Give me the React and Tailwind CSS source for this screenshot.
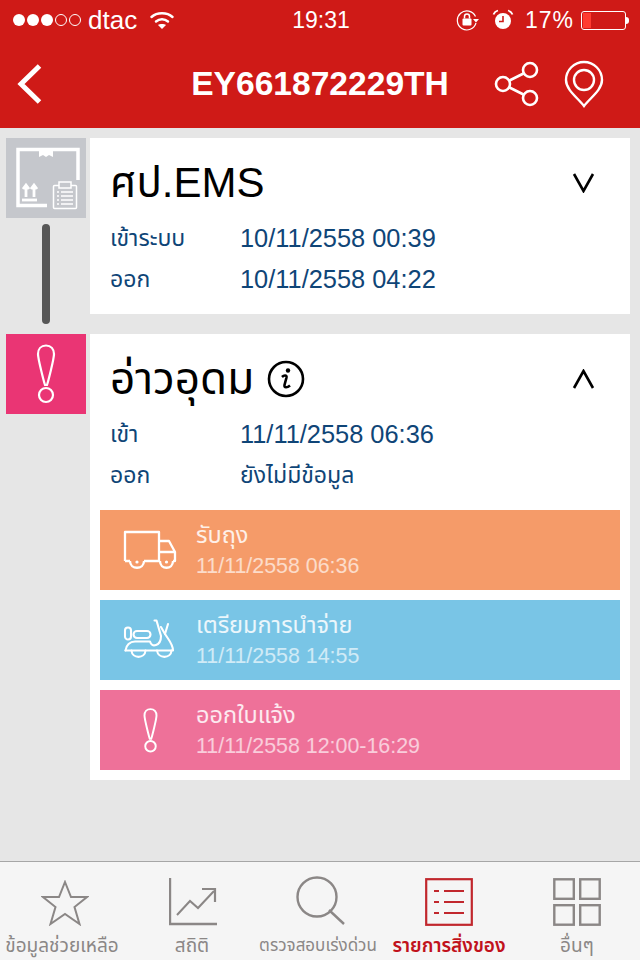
import React from "react";

function Wifi() {
  return (
    <svg width="26" height="20" viewBox="0 0 26 20" fill="none" stroke="#fff" strokeWidth="2.5" strokeLinecap="round">
      <path d="M2.5 7C8 2 18 2 23.5 7" />
      <path d="M7 11.5C10.5 8.5 15.5 8.5 19 11.5" />
      <path d="M13 19 L9 15 C11 13.6 15 13.6 17 15 Z" fill="#fff" stroke="none" />
    </svg>
  );
}

function Lock() {
  return (
    <svg width="24" height="22" viewBox="0 0 24 22" fill="none" stroke="#fff">
      <path d="M20 14A9.5 9.5 0 1 1 19.5 7.5" strokeWidth="1.2" />
      <path d="M17 10h6l-3 3.5z" fill="#fff" stroke="none" />
      <rect x="6.5" y="9.5" width="9" height="7" rx="1" fill="#fff" stroke="none" />
      <path d="M8.5 9.5V7.5a2.5 2.5 0 0 1 5 0v2" strokeWidth="1.5" />
    </svg>
  );
}

function Alarm() {
  return (
    <svg width="22" height="22" viewBox="0 0 22 22" fill="none">
      <circle cx="11" cy="12" r="8" fill="#fff" />
      <path d="M11 7v5.5H7" stroke="#cf1a17" strokeWidth="1.6" />
      <path d="M1.5 5.5C2.5 3 4 2 6 1.5M20.5 5.5C19.5 3 18 2 16 1.5" stroke="#fff" strokeWidth="1.8" />
    </svg>
  );
}

function Exclaim({ w, h, sw }) {
  return (
    <svg width={w} height={h} viewBox="0 0 20 60" fill="none" stroke="#fff" strokeWidth={sw}>
      <path d="M10 1.5C5 1.5 2 5 2 10C2 15 8 38 9 41H11C12 38 18 15 18 10C18 5 15 1.5 10 1.5Z" />
      <circle cx="10" cy="51" r="7" />
    </svg>
  );
}

function Box() {
  return (
    <svg width="80" height="80" viewBox="0 0 80 80" fill="none" stroke="#fff">
      <path d="M72 42V11.5H12V67.5H41" strokeWidth="3.5" />
      <path d="M33 11V19L37 17L40 19L43 17L47 19V11" fill="#fff" stroke="none" />
      <path d="M16 62H31" strokeWidth="2.8" />
      <path d="M20 59V48M17 51L20 47L23 51M28 59V48M25 51L28 47L31 51" strokeWidth="2.8" />
      <rect x="47.5" y="47.5" width="23" height="23" rx="1" strokeWidth="1.5" />
      <rect x="53" y="44" width="12" height="6" fill="#c5c7cc" strokeWidth="1.5" />
      <path d="M51 54h2M55 54h12M51 58h2M55 58h12M51 62h2M55 62h12M51 66h2M55 66h12" strokeWidth="1.4" />
    </svg>
  );
}

function Truck() {
  return (
    <svg width="54" height="40" viewBox="0 0 54 40" fill="none" stroke="#fff" strokeWidth="2.3" strokeLinejoin="round">
      <path d="M2 31V2H36V31" />
      <path d="M2 31H7M21 31H36M36 11H46L52 22V31H50M36 31H37M36 22H52" />
      <path d="M7 31C7 40 21 40 21 31M37 31C37 40 50 40 50 31" />
      <circle cx="14" cy="32" r="1.6" fill="#fff" stroke="none" />
      <circle cx="43.5" cy="32" r="1.6" fill="#fff" stroke="none" />
    </svg>
  );
}

function Scooter() {
  return (
    <svg width="54" height="42" viewBox="0 0 54 42" fill="none" stroke="#fff" strokeWidth="2.1" strokeLinejoin="round" strokeLinecap="round">
      <rect x="2" y="8.5" width="6" height="12" rx="3" />
      <rect x="10.5" y="12" width="17" height="7" rx="3.5" />
      <path d="M2.5 31.5C3 26 7 22.5 12 22.5H27C28 26 30 27 33 26C36 25 38 22 38 17L33.5 1.5H31.5" />
      <path d="M38 8L42 15C45 20 50 25 50 31.5H2.5" />
      <path d="M42 15L45 5" />
      <path d="M8.5 31.5C9 40 22 40 22.5 31.5M34 31.5C35 40 48 40 48.5 31.5" />
    </svg>
  );
}

function Step({ color, icon, title, time }) {
  return (
    <div className={`flex h-20 items-stretch ${color}`}>
      <div className="flex w-[96px] shrink-0 items-center justify-center pl-[4px]">{icon}</div>
      <div className="flex flex-col pt-[10px]">
        <div className="text-[23.5px] leading-[30px] text-white/85">{title}</div>
        <div className="mt-[1px] text-[21.4px] leading-[30px] text-white/65">{time}</div>
      </div>
    </div>
  );
}

function Chevron({ up }) {
  return (
    <svg width="24" height="20" viewBox="0 0 24 20" fill="none" stroke="#000" strokeWidth="2.6">
      {up ? <path d="M2 19L11.5 2L21 19" /> : <path d="M2 1L11.5 18L21 1" />}
    </svg>
  );
}

function InfoRow({ label, value, thai }) {
  return (
    <div className="flex h-[41px] items-center text-[23px] text-[#0f4577]">
      <div className="w-[130px]">{label}</div>
      <div className={thai ? "" : "text-[25.4px]"}>{value}</div>
    </div>
  );
}

function Tab({ icon, label, active, width, size, shift }) {
  return (
    <div className={`flex shrink-0 flex-col items-center ${width}`}>
      <div className={`flex h-[64px] items-end ${shift}`}>{icon}</div>
      <div className={`mt-[6px] whitespace-nowrap leading-[28px] ${size} ${active ? "font-semibold text-[#c1121c]" : "text-[#8b8786]"}`}>{label}</div>
    </div>
  );
}

export default function App() {
  return (
    <div className="flex h-[960px] w-[640px] flex-col overflow-hidden bg-[#e6e6e6] font-['Liberation_Sans','Noto_Sans_Thai','Noto_Sans',sans-serif]">
      <div className="bg-[#cf1a17] text-white">
        <div className="flex h-[40px] items-center justify-between pl-[13px] pr-[11px]">
          <div className="flex w-[200px] items-center">
            <div className="flex items-center gap-[2px]">
              {[0, 1, 2].map((i) => <span key={i} className="h-[12px] w-[12px] rounded-full bg-white" />)}
              {[0, 1].map((i) => <span key={i} className="h-[12px] w-[12px] rounded-full border border-white" />)}
            </div>
            <span className="ml-[7px] text-[26px] leading-none">dtac</span>
            <span className="ml-[12px] flex"><Wifi /></span>
          </div>
          <div className="text-[23px] leading-none">19:31</div>
          <div className="flex w-[200px] items-center justify-end">
            <Lock />
            <span className="ml-[12px]"><Alarm /></span>
            <span className="ml-[11px] text-[23px] font-light leading-none tracking-[1px]">17%</span>
            <div className="ml-[7px] h-[19px] w-[45px] rounded-[3px] border border-white p-[1px]">
              <div className="h-full w-[8px] bg-[#ff3b30]" />
            </div>
            <div className="h-[7px] w-[3px] rounded-r-full bg-white" />
          </div>
        </div>
        <div className="flex h-[88px] items-center">
          <div className="w-[150px] pl-[17px]">
            <svg width="25" height="40" viewBox="0 0 25 40" fill="none" stroke="#fff" strokeWidth="5"><path d="M22.5 2L4 20L22.5 38" /></svg>
          </div>
          <div className="flex-1 whitespace-nowrap text-center text-[33.6px] font-bold leading-none">EY661872229TH</div>
          <div className="flex w-[150px] items-center">
            <svg className="ml-[4px]" width="46" height="46" viewBox="0 0 46 46" fill="none" stroke="#fff" strokeWidth="2.6">
              <circle cx="36" cy="9" r="7" /><circle cx="9" cy="23" r="7" /><circle cx="36" cy="37" r="7" />
              <path d="M15.5 19.5L29.5 12.5M15.5 26.5L29.5 33.5" />
            </svg>
            <svg className="ml-[24px]" width="40" height="48" viewBox="0 0 40 48" fill="none" stroke="#fff" strokeWidth="2.4">
              <path d="M20 46C14 38 2 30 2 20A18 18 0 0 1 38 20C38 30 26 38 20 46Z" />
              <circle cx="20" cy="20" r="10" />
            </svg>
          </div>
        </div>
      </div>

      <div className="flex-1 pt-[10px]">
        <div className="flex items-start gap-[4px] pl-[6px] pr-[10px]">
          <div className="flex w-[80px] shrink-0 flex-col items-center">
            <div className="h-[80px] w-[80px] bg-[#c5c7cc]"><Box /></div>
            <div className="mt-[6px] h-[100px] w-[8px] rounded-full bg-[#575757]" />
          </div>
          <div className="h-[176px] flex-1 bg-white px-[20px] pt-[18px]">
            <div className="flex h-[54px] items-center justify-between">
              <span className="text-[42px] leading-none text-black">ศป.EMS</span>
              <span className="mr-[14px]"><Chevron /></span>
            </div>
            <div className="mt-[8px]">
              <InfoRow label="เข้าระบบ" value="10/11/2558 00:39" />
              <InfoRow label="ออก" value="10/11/2558 04:22" />
            </div>
          </div>
        </div>

        <div className="mt-[10px] flex items-start gap-[4px] pl-[6px] pr-[10px]">
          <div className="flex h-[80px] w-[80px] shrink-0 items-center justify-center bg-[#ea3574]">
            <Exclaim w={20} h={60} sw={2.2} />
          </div>
          <div className="flex-1 bg-white pb-[10px] pt-[18px]">
            <div className="px-[20px]">
              <div className="flex h-[54px] items-center justify-between">
                <span className="flex items-center gap-[13px]">
                  <span className="text-[44px] leading-none text-black">อ่าวอุดม</span>
                  <svg width="38" height="38" viewBox="0 0 38 38" fill="none" stroke="#000" strokeWidth="2.6">
                    <circle cx="19" cy="19" r="17" />
                    <circle cx="21" cy="10.5" r="2.2" fill="#000" stroke="none" />
                    <path d="M15 17C17 15 20 15 19.5 17.5L17.5 25C17 28 20 28 23 25.5" />
                  </svg>
                </span>
                <span className="mr-[14px]"><Chevron up /></span>
              </div>
              <div className="mt-[8px]">
                <InfoRow label="เข้า" value="11/11/2558 06:36" />
                <InfoRow label="ออก" value="ยังไม่มีข้อมูล" thai />
              </div>
            </div>
            <div className="mt-[14px] flex flex-col gap-[10px] px-[10px]">
              <Step color="bg-[#f59b69]" icon={<Truck />} title="รับถุง" time="11/11/2558 06:36" />
              <Step color="bg-[#79c5e6]" icon={<Scooter />} title="เตรียมการนำจ่าย" time="11/11/2558 14:55" />
              <Step color="bg-[#ee7199]" icon={<Exclaim w={15} h={45} sw={2.6} />} title="ออกใบแจ้ง" time="11/11/2558 12:00-16:29" />
            </div>
          </div>
        </div>
      </div>

      <div className="flex h-[99px] items-start border-t border-t-[#a6a6a6] bg-[#f5f5f5]">
        <Tab width="w-[124px]" size="text-[19px]" shift="ml-[6px]" label="ข้อมูลช่วยเหลือ" icon={
          <svg width="48" height="46" viewBox="0 0 48 46" fill="none" stroke="#8b8786" strokeWidth="2"><path d="M24 2L30 17H46L33.5 27L38.5 44L24 34L9.5 44L14.5 27L2 17H18Z" /></svg>
        } />
        <Tab width="w-[136px]" size="text-[19px]" shift="ml-[2px]" label="สถิติ" icon={
          <svg width="48" height="48" viewBox="0 0 48 48" fill="none" stroke="#8b8786"><path d="M1 0V46H48" strokeWidth="2.4" /><path d="M8 37L21 23L29 30L45 13" strokeWidth="2" /><path d="M33 11H46V24" strokeWidth="2.2" /></svg>
        } />
        <Tab width="w-[116px]" size="text-[17px]" shift="ml-[5px]" label="ตรวจสอบเร่งด่วน" icon={
          <svg width="50" height="50" viewBox="0 0 50 50" fill="none" stroke="#8b8786" strokeWidth="2.4"><circle cx="21" cy="21" r="19.5" /><path d="M33 34L48 48" /></svg>
        } />
        <Tab active width="w-[146px]" size="text-[19px]" label="รายการสิ่งของ" icon={
          <svg width="48" height="48" viewBox="0 0 48 48" fill="none" stroke="#c1272d" strokeWidth="2.2"><rect x="1.2" y="1.2" width="45.6" height="45.6" /><path d="M9 13h5M19 13h20M9 24h5M19 24h20M9 35h5M19 35h20" /></svg>
        } />
        <Tab width="w-[110px]" size="text-[19px]" label="อื่นๆ" icon={
          <svg width="48" height="48" viewBox="0 0 48 48" fill="none" stroke="#8b8786" strokeWidth="2.4"><rect x="1.3" y="1.3" width="19.5" height="19.5" /><rect x="27.2" y="1.3" width="19.5" height="19.5" /><rect x="1.3" y="27.2" width="19.5" height="19.5" /><rect x="27.2" y="27.2" width="19.5" height="19.5" /></svg>
        } />
      </div>
    </div>
  );
}
